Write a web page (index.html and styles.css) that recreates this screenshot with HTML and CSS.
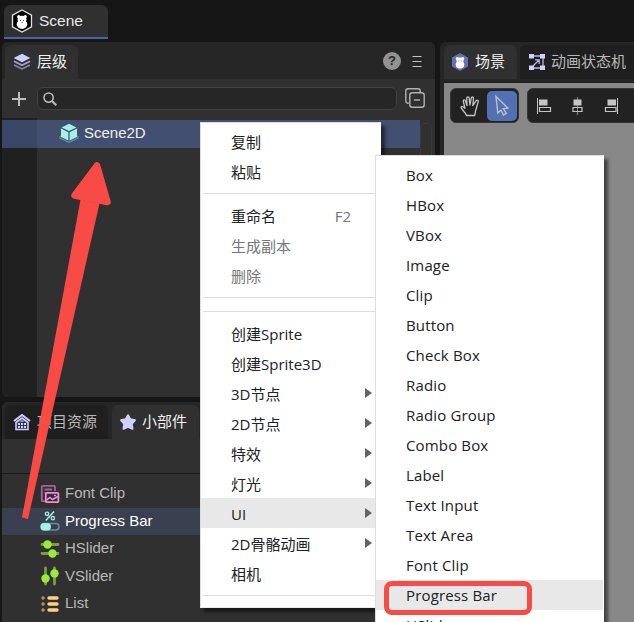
FILE: index.html
```html
<!DOCTYPE html>
<html lang="zh-CN">
<head>
    <meta charset="UTF-8">
    <meta name="viewport" content="width=device-width, initial-scale=1.0">
    <title>Scene</title>
    <link rel="stylesheet" href="styles.css">
</head>
<body>

<header class="title-bar">
    <div class="scene-tab">
        <svg class="logo" width="22" height="24" viewBox="0 0 22 24">
            <path d="M11 1 20.5 6.2V17.8L11 23 1.5 17.8V6.2Z" fill="#000" stroke="#e4e4e4" stroke-width="1.3"/>
            <circle cx="7.8" cy="7.8" r="1.7" fill="#fff"/><circle cx="14.2" cy="7.8" r="1.7" fill="#fff"/>
            <ellipse cx="11" cy="10.5" rx="4.4" ry="3.8" fill="#fff"/><ellipse cx="11" cy="15.3" rx="5.3" ry="4.7" fill="#fff"/>
            <path d="M9 11.5h1M12 11.5h1M10.5 13.5h1" stroke="#555"/>
        </svg>
        <span>Scene</span>
    </div>
</header>

<main class="workspace">
    <div class="left-column">
        <section class="panel hierarchy">
            <div class="panel-tabs">
                <div class="tab active tab-level">
                    <svg width="18" height="18" viewBox="0 0 18 18">
                        <path d="M9 .8 17.3 5 9 9.2.7 5Z" fill="#ced0ff"/>
                        <path d="M1 8.3 9 12.3 17 8.3" fill="none" stroke="#a4a6cd" stroke-width="1.7"/>
                        <path d="M1 11.9 9 15.9 17 11.9" fill="none" stroke="#8385a4" stroke-width="1.7"/>
                    </svg>
                    <span>层级</span>
                </div>
                <div class="panel-actions">
                    <span class="help">?</span>
                    <svg width="10" height="13" viewBox="0 0 10 13"><path d="M.5 1.5h9M.5 6.5h9M.5 11.5h9" stroke="#c4c4c4" stroke-width="1.2"/></svg>
                </div>
            </div>
            <div class="search-row">
                <svg width="14" height="14" viewBox="0 0 14 14"><path d="M7 0v14M0 7h14" stroke="#bdbdbd" stroke-width="2"/></svg>
                <div class="search-box">
                    <svg width="14" height="14" viewBox="0 0 14 14"><circle cx="5.6" cy="5.6" r="4.6" fill="none" stroke="#b9b9b9" stroke-width="1.6"/><path d="M8.8 8.8 13.3 13.3" stroke="#b9b9b9" stroke-width="2.2"/></svg>
                </div>
                <svg class="collapse" width="20" height="20" viewBox="0 0 20 20" fill="none" stroke="#b2b2b2" stroke-width="1.4">
                    <path d="M3.8 15.2H3A2.2 2.2 0 0 1 .8 13V3A2.2 2.2 0 0 1 3 .8H13A2.2 2.2 0 0 1 15.2 3V4"/>
                    <rect x="4.8" y="4.8" width="14.4" height="14.4" rx="2.5"/><path d="M9 12h6"/>
                </svg>
            </div>
            <div class="tree">
                <div class="tree-row">
                    <svg width="20" height="20" viewBox="0 0 20 20">
                        <path d="M3 12.500 1 13.500v1.500l9 4.300 9-4.300v-1.500l-2-1" fill="none" stroke="#5f9097" stroke-width="1.3"/>
                        <path d="M10 .8 17.4 4.4 10 8 2.6 4.4Z" fill="#a3f1e7"/>
                        <path d="M2 5.6 9.4 9.2V17.6L2 14Z" fill="#a3f1e7"/>
                        <path d="M18 5.6 10.6 9.2V17.6L18 14Z" fill="#a3f1e7"/>
                    </svg>
                    <span>Scene2D</span>
                </div>
                <div class="scroll"></div>
            </div>
        </section>

        <section class="panel assets">
            <div class="panel-tabs">
                <div class="tab tab-project">
                    <svg width="18" height="18" viewBox="0 0 18 18">
                        <path d="M1 8 9 2 17 8" fill="none" stroke="#ced0ff" stroke-width="2"/>
                        <path d="M3 9.5 9 5 15 9.5V16.5H3Z" fill="#303044" stroke="#ced0ff" stroke-width="1.6"/>
                        <path d="M5 10h2v2H5zM8 10h2v2H8zM11 10h2v2h-2zM5 13h2v2H5zM8 13h2v2H8zM11 13h2v2h-2zM7.5 7.4h3v1.4h-3z" fill="#ced0ff"/>
                    </svg>
                    <span>项目资源</span>
                </div>
                <div class="tab active tab-widgets">
                    <svg width="18" height="18" viewBox="0 0 18 18"><path d="M9 2.200 11.3 6.3 16 7.2 12.8 10.8 13.5 15.8 9 13.8 4.5 15.8 5.2 10.8 2 7.2 6.7 6.3Z" fill="#ced0ff" stroke="#ced0ff" stroke-width="2" stroke-linejoin="round"/></svg>
                    <span>小部件</span>
                </div>
            </div>
            <div class="asset-toolbar"></div>
            <div class="widget-list">
                <div class="widget">
                    <svg width="20" height="20" viewBox="0 0 20 20" fill="none">
                        <path d="M5 17.200H2.800A1 1 0 0 1 1.800 16.200V2.800A1 1 0 0 1 2.800 1.800H14A1 1 0 0 1 15 2.800V7M4.500 5.500h7.500M4.500 9h3" stroke="#a96399" stroke-width="1.800"/>
                        <rect x="5.800" y="8.800" width="12.600" height="9.400" rx="1" stroke="#f48ad8" stroke-width="1.800"/>
                        <path d="M6 16.500 10 13.500 12.500 15.500 18 12.500M14 11.500h2" stroke="#f48ad8" stroke-width="1.500"/>
                    </svg>
                    <span>Font Clip</span>
                </div>
                <div class="widget selected">
                    <svg width="20" height="20" viewBox="0 0 20 20" fill="none">
                        <circle cx="7" cy="2.800" r="1.700" stroke="#a3f1e7" stroke-width="1.300"/><circle cx="12.800" cy="7.200" r="1.700" stroke="#a3f1e7" stroke-width="1.300"/>
                        <path d="M14 .5 5.800 9.500" stroke="#a3f1e7" stroke-width="1.500"/>
                        <rect x="1" y="12.500" width="18" height="6.500" rx="3.200" stroke="#64919a" stroke-width="1.500"/>
                        <rect x=".5" y="12" width="10.500" height="7.500" rx="3.700" fill="#a3f1e7"/>
                    </svg>
                    <span>Progress Bar</span>
                </div>
                <div class="widget">
                    <svg width="20" height="20" viewBox="0 0 20 20">
                        <path d="M2 5.500h16M2 14.500h16" stroke="#78a043" stroke-width="2.800" stroke-linecap="round"/>
                        <circle cx="7.500" cy="5.500" r="4.200" fill="#9de93b"/><circle cx="12.500" cy="14.500" r="4.200" fill="#9de93b"/>
                    </svg>
                    <span>HSlider</span>
                </div>
                <div class="widget">
                    <svg width="20" height="20" viewBox="0 0 20 20">
                        <path d="M5.500 2v16M14.500 2v16" stroke="#78a043" stroke-width="2.800" stroke-linecap="round"/>
                        <circle cx="5.500" cy="12.500" r="4.200" fill="#9de93b"/><circle cx="14.500" cy="7.500" r="4.200" fill="#9de93b"/>
                    </svg>
                    <span>VSlider</span>
                </div>
                <div class="widget">
                    <svg width="20" height="20" viewBox="0 0 20 20" stroke-width="3.400" stroke-linecap="round">
                        <path d="M3 4h.1M3 10h.1M3 16h.1" stroke="#b28f5c"/>
                        <path d="M9 4h8M9 10h8M9 16h8" stroke="#ffd07d"/>
                    </svg>
                    <span>List</span>
                </div>
            </div>
        </section>
    </div>

    <section class="panel scene-view">
        <div class="panel-tabs">
            <div class="tab active tab-scene">
                <svg width="18" height="20" viewBox="0 0 18 20">
                    <path d="M9 1 17 5.500V14.500L9 19 1 14.500V5.500Z" fill="#6370b6"/>
                    <circle cx="6.300" cy="6.500" r="1.600" fill="#fff"/><circle cx="11.700" cy="6.500" r="1.600" fill="#fff"/>
                    <ellipse cx="9" cy="8.600" rx="3.500" ry="3" fill="#fff"/><ellipse cx="9" cy="12.800" rx="4.300" ry="3.700" fill="#fff"/>
                    <path d="M7.300 9h1M9.800 9h1" stroke="#6370b6"/>
                </svg>
                <span>场景</span>
            </div>
            <div class="tab tab-anim">
                <svg width="18" height="18" viewBox="0 0 18 18">
                    <path d="M5 3h8M5 15h8M15 5v8M5 13 11 7M7 6.800h4.200V11" fill="none" stroke="#b5b7e4" stroke-width="1.300"/>
                    <path d="M1 1h5v4.500H1zM12 1h5v4.500h-5zM1 12.500h5V17H1zM12 12.500h5V17h-5z" fill="#ced0ff"/>
                </svg>
                <span>动画状态机</span>
            </div>
        </div>
        <div class="canvas">
            <div class="tool-group">
                <div class="tool">
                    <svg width="20" height="22" viewBox="0 0 20 22" fill="none" stroke="#c6c6c6" stroke-width="1.300" stroke-linejoin="round">
                        <path d="M6.500 20.500C5.500 17 1.500 14.500 1 12.500 1.200 11 3 11.200 5 13.200L3.300 6.500C3 4.700 5 4.300 5.500 6L7 10.500 6.700 3.200C6.800 1.300 9 1.300 9.200 3.200L9.900 10 11.300 2.900C11.800 1.200 13.700 1.700 13.500 3.500L12.800 10.500 16.200 5.700C17.200 4.400 18.900 5.400 18.200 7 17 10 16.700 13 15.500 16L14.700 20.500Z"/>
                    </svg>
                </div>
                <div class="tool on">
                    <svg width="16" height="22" viewBox="0 0 16 22" fill="none" stroke="#b9bcc4" stroke-width="1.500"><path d="M2 1.500 13.800 13 9.500 13.800 12.300 18.500 9.500 20 6.900 15.200 3.800 18Z"/></svg>
                </div>
            </div>
            <div class="tool-group align-group">
                <svg width="16" height="16" viewBox="0 0 16 16"><path d="M1.500 0v16" stroke="#c6c6c6"/><path d="M3 1.500h8.500v6H3z" fill="#c6c6c6"/><path d="M3.500 9.500h11v4H3.500z" fill="none" stroke="#c6c6c6" stroke-width="1.200"/></svg>
                <svg width="16" height="18" viewBox="0 0 16 18"><path d="M7.500 0v18" stroke="#777" stroke-width="1.300"/><path d="M3.500 2.500h8v6h-8z" fill="#c6c6c6"/><path d="M3 10.500h9v4H3z" fill="#222" stroke="#c6c6c6" stroke-width="1.200"/><path d="M7.500 11v3" stroke="#888"/></svg>
                <svg width="16" height="16" viewBox="0 0 16 16"><path d="M13.500 0v16" stroke="#c6c6c6"/><path d="M3.500 1.500h8.500v6H3.500z" fill="#c6c6c6"/><path d="M1.500 9.500h10.500v4H1.500z" fill="none" stroke="#c6c6c6" stroke-width="1.200"/></svg>
            </div>
        </div>
    </section>
</main>

<nav class="menu context-menu">
    <div class="item">复制</div>
    <div class="item">粘贴</div>
    <div class="separator"></div>
    <div class="item">重命名<span class="shortcut">F2</span></div>
    <div class="item disabled">生成副本</div>
    <div class="item disabled">删除</div>
    <div class="separator"></div>
    <div class="separator"></div>
    <div class="item">创建Sprite</div>
    <div class="item">创建Sprite3D</div>
    <div class="item has-sub">3D节点</div>
    <div class="item has-sub">2D节点</div>
    <div class="item has-sub">特效</div>
    <div class="item has-sub">灯光</div>
    <div class="item has-sub hover">UI</div>
    <div class="item has-sub">2D骨骼动画</div>
    <div class="item">相机</div>
    <div class="separator"></div>
</nav>

<nav class="menu sub-menu">
    <div class="item">Box</div>
    <div class="item">HBox</div>
    <div class="item">VBox</div>
    <div class="item">Image</div>
    <div class="item">Clip</div>
    <div class="item">Button</div>
    <div class="item">Check Box</div>
    <div class="item">Radio</div>
    <div class="item">Radio Group</div>
    <div class="item">Combo Box</div>
    <div class="item">Label</div>
    <div class="item">Text Input</div>
    <div class="item">Text Area</div>
    <div class="item">Font Clip</div>
    <div class="item hover">Progress Bar</div>
    <div class="item">HSlider</div>
</nav>

<!-- drag arrow and highlight -->
<svg class="arrow" width="634" height="622" viewBox="0 0 634 622">
    <path d="M80.500 199.500 22 517.500 28 519 99.500 203.500Z" fill="#f84b46"/>
    <path d="M97 165.500 107.500 202 74.500 195.500Z" fill="#f84b46" stroke="#f84b46" stroke-width="6.500" stroke-linejoin="round"/>
</svg>
<div class="highlight"></div>

</body>
</html>
```
FILE: styles.css
```css
* {
    box-sizing: border-box;
}

body {
    margin: 0;
    width: 634px;
    height: 622px;
    position: relative;
    overflow: hidden;
    display: flex;
    flex-direction: column;
    background: #161616;
    color: #b9b9b9;
    font-family: "Liberation Sans", "Noto Sans CJK SC", sans-serif;
    font-size: 15px;
}

svg {
    flex: none;
    display: block;
}

.title-bar {
    height: 42px;
    padding: 5px 4px 0;
    flex: none;
}

.scene-tab {
    width: 104px;
    height: 34px;
    padding-left: 7px;
    display: flex;
    align-items: center;
    gap: 6px;
    background: #303030;
    border-bottom: 2px solid #4d659e;
    border-radius: 6px 6px 0 0;
    color: #e8e8e8;
    font-size: 15.500px;
}

.workspace {
    flex: 1;
    min-height: 0;
    display: flex;
    gap: 5px;
    padding-left: 2px;
}

.left-column {
    width: 433px;
    flex: none;
    display: flex;
    flex-direction: column;
    gap: 5px;
}

.panel {
    background: #303030;
    border-radius: 6px;
    overflow: hidden;
    display: flex;
    flex-direction: column;
}

.hierarchy {
    height: 355px;
    flex: none;
}

.panel-tabs {
    height: 37px;
    flex: none;
    display: flex;
    gap: 4px;
    padding: 3px 3px 0;
    background: #262626;
}

.tab {
    height: 34px;
    flex: none;
    display: flex;
    align-items: center;
    gap: 5px;
    padding-left: 8px;
    background: #1f1f1f;
    border-radius: 6px 6px 0 0;
    white-space: nowrap;
}

.tab.active {
    background: #303030;
    color: #f0f0f0;
}

.tab span {
    line-height: 20px;
}

.tab-level { width: 73px; }
.tab-project { width: 103px; }
.tab-widgets { width: 87px; padding-left: 7px; }
.tab-scene { width: 73px; padding-left: 7px; gap: 6px; }
.tab-anim { width: 140px; }

.tab-level,
.tab-project {
    gap: 6px;
}

.panel-actions {
    margin-left: auto;
    margin-right: 10px;
    display: flex;
    align-items: center;
    gap: 11px;
}

.help {
    width: 18px;
    height: 18px;
    margin-bottom: 3px;
    border-radius: 50%;
    background: #929292;
    color: #262626;
    font-size: 13px;
    font-weight: bold;
    line-height: 18px;
    text-align: center;
}

.panel-actions svg {
    margin-bottom: 2px;
}

.search-row {
    height: 39px;
    flex: none;
    display: flex;
    align-items: center;
    padding-left: 10px;
}

.search-box {
    width: 360px;
    height: 23px;
    margin: 0 8px 0 11px;
    padding-left: 5px;
    display: flex;
    align-items: center;
    background: #262626;
    border: 1px solid #424242;
    border-radius: 6px;
}

.collapse {
    margin-bottom: 1px;
}

.tree {
    flex: 1;
    display: flex;
    padding-top: 2px;
    background: linear-gradient(to right, #202020 35px, #303030 35px);
}

.tree-row {
    width: 418px;
    height: 28px;
    padding-left: 57px;
    display: flex;
    align-items: center;
    gap: 5px;
    background: linear-gradient(to right, #394666 35px, #424f70 35px);
    color: #f0f0f0;
}

.tree-row svg {
    margin-bottom: 2px;
}

.tree-row span {
    margin-bottom: 3px;
}

.scroll {
    width: 12px;
    margin-top: 3px;
    border: 1px solid #3a3a3a;
    border-radius: 5px;
}

.assets {
    flex: 1;
    border-radius: 6px 6px 0 0;
}

.asset-toolbar {
    height: 35px;
    flex: none;
    border-bottom: 1px solid #1c1c1c;
}

.widget-list {
    padding-top: 6px;
    display: flex;
    flex-direction: column;
}

.widget {
    height: 27.500px;
    flex: none;
    display: flex;
    align-items: center;
    gap: 5px;
    padding-left: 38px;
}

.widget span {
    margin-bottom: 2px;
}

.widget.selected {
    background: #3a404f;
    color: #fff;
}

.scene-view {
    flex: 1;
    min-width: 0;
    border-radius: 6px 0 0 0;
    background: #262626;
}

.scene-view .panel-tabs {
    padding-left: 4px;
    gap: 3px;
}

.canvas {
    flex: 1;
    margin: 3px 0 0 4px;
    padding: 5px 0 0 6px;
    display: flex;
    gap: 8px;
    background: #888;
    border-top: 1px solid #1b1b1b;
    overflow: hidden;
}

.tool-group {
    width: 69px;
    height: 35px;
    flex: none;
    display: flex;
    align-items: center;
    padding: 2px;
    background: #222;
    border: 1px solid #353535;
    border-radius: 6px;
}

.tool {
    width: 34px;
    height: 30px;
    flex: none;
    display: flex;
    align-items: center;
    justify-content: center;
    border-radius: 5px;
}

.tool.on {
    width: 30px;
    background: #5270b2;
}

.align-group {
    width: 150px;
    padding-left: 8px;
    gap: 18px;
}

/* menus */
.menu {
    position: absolute;
    display: flex;
    flex-direction: column;
    background: #fff;
    border: 1px solid #dcdde0;
    border-right-color: #fff;
    border-bottom-color: #eee;
    box-shadow: 4px 4px 3px rgba(0, 0, 0, 0.5);
    color: #202124;
    font-family: "Open Sans", "Noto Sans CJK SC", sans-serif;
    font-size: 15px;
}

.context-menu {
    left: 200px;
    top: 122px;
    width: 181px;
    height: 486px;
    padding-top: 3px;
}

.sub-menu {
    left: 375px;
    top: 155px;
    bottom: 0;
    width: 229px;
    padding-top: 4px;
    border-bottom: none;
    overflow: hidden;
    letter-spacing: 0.15px;
}

.item {
    height: 30px;
    flex: none;
    display: flex;
    align-items: center;
    padding-left: 30px;
    line-height: 30px;
    white-space: nowrap;
}

.context-menu .item {
    padding-top: 1px;
}

.item.disabled,
.shortcut {
    color: #74777c;
}

.item.hover {
    background: #e8e8e8;
}

.shortcut {
    margin-left: auto;
    margin-right: 29px;
}

.has-sub::after {
    content: "";
    margin-left: auto;
    margin-right: 8px;
    margin-bottom: 2px;
    border-left: 7px solid #606266;
    border-top: 5px solid transparent;
    border-bottom: 5px solid transparent;
}

.separator {
    height: 1px;
    flex: none;
    margin: 7px 0 6px 2px;
    background: #dcdcde;
}

.arrow {
    position: absolute;
    left: 0;
    top: 0;
}

.highlight {
    position: absolute;
    left: 384px;
    top: 581px;
    width: 148px;
    height: 34px;
    border: 5px solid #f84b46;
    border-radius: 8px;
}
```
